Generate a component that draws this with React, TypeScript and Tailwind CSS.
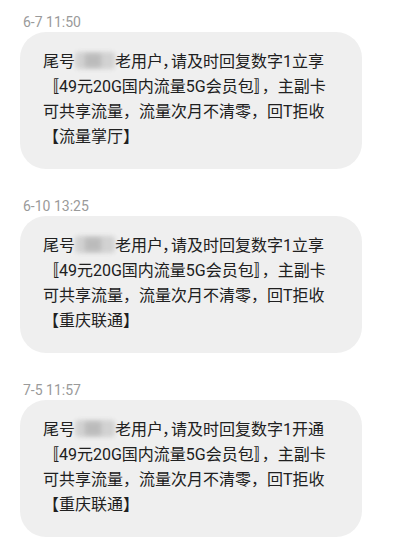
const messages = [
  { time: "6-7 11:50", verb: "立享", sign: "【流量掌厅】" },
  { time: "6-10 13:25", verb: "立享", sign: "【重庆联通】" },
  { time: "7-5 11:57", verb: "开通", sign: "【重庆联通】" },
];

function Redacted() {
  return (
    <span className="relative inline-block h-[17px] w-[40px] align-[-2px]">
      <span className="absolute inset-0 rounded-[4px] bg-[#d2d2d2] blur-[2px]" />
      <span className="absolute left-[10px] top-[2px] h-[13px] w-[16px] bg-[#bbbbbb] blur-[2px]" />
    </span>
  );
}

function Bubble({ verb, sign }: { verb: string; sign: string }) {
  return (
    <div className="w-[342px] rounded-[26px] bg-[#efefef] pl-[23px] pr-[10px] pt-[17px] pb-[20px] text-[16px] leading-[25px] text-[#202020]">
      <div className="whitespace-nowrap">
        尾号
        <Redacted />
        老用户<span className="[font-feature-settings:'palt']">，</span>请及时回复数字1{verb}
      </div>
      <div className="whitespace-nowrap">〚49元20G国内流量5G会员包〛，主副卡</div>
      <div className="whitespace-nowrap">可共享流量，流量次月不清零，回T拒收</div>
      <div className="whitespace-nowrap">{sign}</div>
    </div>
  );
}

export default function App() {
  return (
    <div
      className="min-h-[558px] w-[414px] bg-white pl-[20px] pt-[12px]"
      style={{ fontFamily: 'Roboto, "Noto Sans CJK SC", sans-serif' }}
    >
      {messages.map((m, i) => (
        <div key={i} className="mb-[27px]">
          <div className="h-[20px] pl-[3px] text-[14px] leading-[20px] text-[#9a9a9a]">{m.time}</div>
          <Bubble verb={m.verb} sign={m.sign} />
        </div>
      ))}
    </div>
  );
}
